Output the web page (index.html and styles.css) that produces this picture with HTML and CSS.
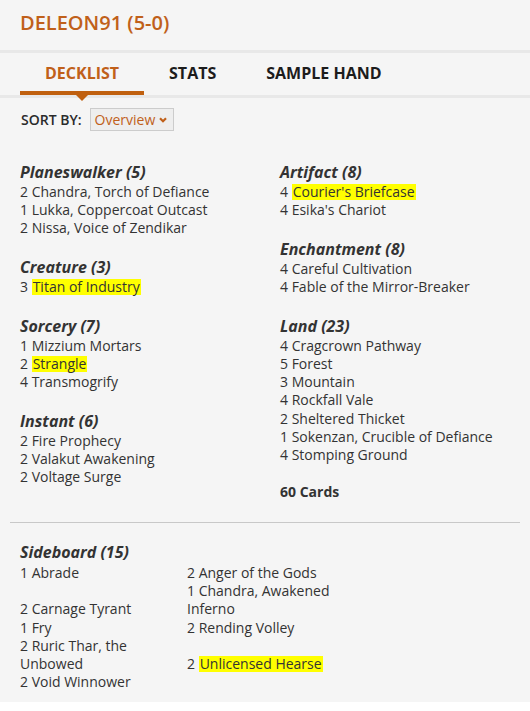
FILE: index.html
```html
<!DOCTYPE html>
<html>
<head>
<meta charset="utf-8">
<link rel="stylesheet" href="styles.css">
</head>
<body>
<div class="card">
  <header class="head">
    <h1 class="title">DELEON91 (5-0)</h1>
  </header>
  <nav class="tabs">
    <span class="tab active">DECKLIST</span>
    <span class="tab">STATS</span>
    <span class="tab">SAMPLE HAND</span>
  </nav>
  <div class="sort">
    <span class="sort-label">SORT BY:</span>
    <span class="select">Overview
      <svg class="chev" width="8" height="6" viewBox="0 0 8 6"><path d="M1 1.2 L4 4.2 L7 1.2" fill="none" stroke="#c0601a" stroke-width="2.2"/></svg>
    </span>
  </div>
  <div class="deck">
    <div class="col">
      <section class="group">
        <h3>Planeswalker (5)</h3>
        <div class="item">2 Chandra, Torch of Defiance</div>
        <div class="item">1 Lukka, Coppercoat Outcast</div>
        <div class="item">2 Nissa, Voice of Zendikar</div>
      </section>
      <section class="group">
        <h3>Creature (3)</h3>
        <div class="item">3 <span class="hl">Titan of Industry</span></div>
      </section>
      <section class="group">
        <h3>Sorcery (7)</h3>
        <div class="item">1 Mizzium Mortars</div>
        <div class="item">2 <span class="hl">Strangle</span></div>
        <div class="item">4 Transmogrify</div>
      </section>
      <section class="group">
        <h3>Instant (6)</h3>
        <div class="item">2 Fire Prophecy</div>
        <div class="item">2 Valakut Awakening</div>
        <div class="item">2 Voltage Surge</div>
      </section>
    </div>
    <div class="col">
      <section class="group">
        <h3>Artifact (8)</h3>
        <div class="item">4 <span class="hl">Courier's Briefcase</span></div>
        <div class="item">4 Esika's Chariot</div>
      </section>
      <section class="group">
        <h3>Enchantment (8)</h3>
        <div class="item">4 Careful Cultivation</div>
        <div class="item">4 Fable of the Mirror-Breaker</div>
      </section>
      <section class="group">
        <h3>Land (23)</h3>
        <div class="item">4 Cragcrown Pathway</div>
        <div class="item">5 Forest</div>
        <div class="item">3 Mountain</div>
        <div class="item">4 Rockfall Vale</div>
        <div class="item">2 Sheltered Thicket</div>
        <div class="item">1 Sokenzan, Crucible of Defiance</div>
        <div class="item">4 Stomping Ground</div>
      </section>
      <div class="total">60 Cards</div>
    </div>
  </div>
  <hr class="divider">
  <section class="side">
    <h3 class="side-title">Sideboard (15)</h3>
    <div class="side-list"><div class="sitem">1 Abrade</div><div class="sitem">2 Anger of the Gods</div><div class="sitem">2 Carnage Tyrant</div><div class="sitem">1 Chandra, Awakened Inferno</div><div class="sitem">1 Fry</div><div class="sitem">2 Rending Volley</div><div class="sitem">2 Ruric Thar, the Unbowed</div><div class="sitem">2 <span class="hl">Unlicensed Hearse</span></div><div class="sitem">2 Void Winnower</div></div>
  </section>
</div>
</body>
</html>
```

FILE: styles.css
```css
html, body {
  margin: 0;
  padding: 0;
  background: #ffffff;
}
body {
  font-family: "Open Sans", "Liberation Sans", sans-serif;
  color: #333333;
}
.card {
  background: #f5f5f5;
  padding-bottom: 11px;
}
.head {
  padding: 9px 20px 14px;
}
.title {
  margin: 0;
  font-size: 20px;
  line-height: 27px;
  font-weight: 600;
  color: #c0601a;
}
.tabs {
  display: flex;
  padding: 0 20px;
  border-top: 3px solid #e8e8e8;
  border-bottom: 3px solid #e8e8e8;
}
.tab {
  position: relative;
  padding: 9px 25px 7px;
  border-bottom: 4px solid transparent;
  font-size: 16px;
  line-height: 22px;
  font-weight: 700;
  color: #1c1c1c;
}
.tab.active {
  color: #c0601a;
  border-bottom-color: #c0600f;
}
.tab.active::after {
  content: "";
  position: absolute;
  left: 50%;
  bottom: -10px;
  margin-left: -6px;
  border-left: 6px solid transparent;
  border-right: 6px solid transparent;
  border-top: 6px solid #c0600f;
}
.sort {
  display: flex;
  align-items: center;
  gap: 8px;
  padding: 10px 21px 0;
}
.sort-label {
  font-size: 14px;
  font-weight: 600;
  color: #2b2b2b;
}
.select {
  display: inline-flex;
  align-items: center;
  gap: 4px;
  height: 21px;
  padding: 0 6px 0 4px;
  border: 1px solid #cccccc;
  background: #eeeeee;
  font-size: 14px;
  color: #c0601a;
}
.chev {
  display: block;
}
.deck {
  display: grid;
  grid-template-columns: 260px 1fr;
  padding: 30px 20px 0;
}
.group {
  margin-bottom: 18.5px;
}
.col > .group:last-child {
  margin-bottom: 0;
}
h3 {
  margin: 0;
  font-size: 16px;
  line-height: 22px;
  font-weight: 700;
  font-style: italic;
  color: #333333;
}
.item, .sitem, .total {
  font-size: 14px;
  line-height: 18.2px;
  color: #333333;
}
.total {
  font-weight: 700;
}
.hl {
  display: inline-block;
  line-height: 16px;
  background: #ffff00;
  padding: 0 1px;
}
.divider {
  margin: 21px 10px 18px;
  border: 0;
  border-top: 1px solid #c8c8c8;
}
.side {
  padding: 0 20px;
}
.side-title {
  margin-bottom: 1px;
}
.side-list {
  width: 334px;
  font-size: 14px;
  line-height: 18.2px;
}
.sitem {
  display: inline-block;
  width: 167px;
  vertical-align: baseline;
}
```
